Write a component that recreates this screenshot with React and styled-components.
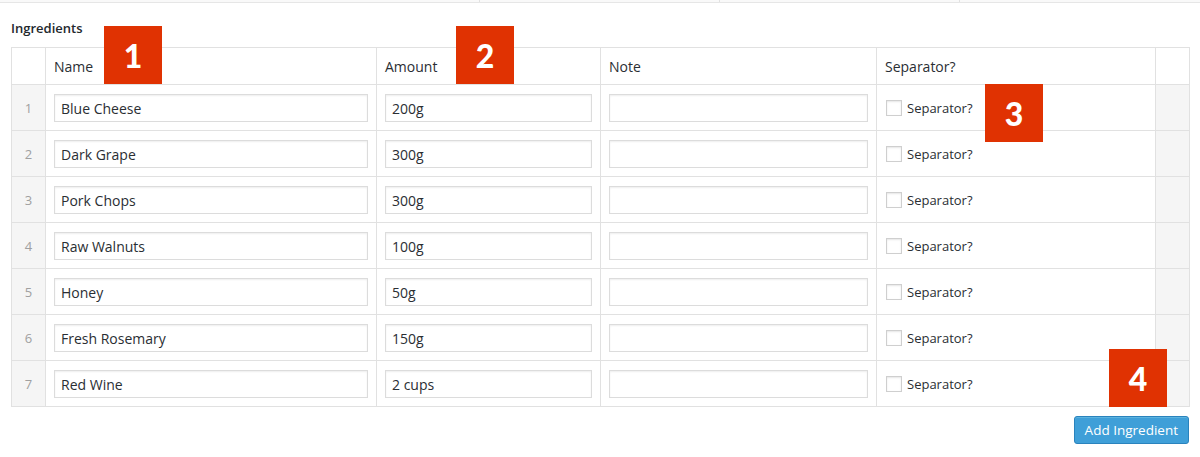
import styled, { createGlobalStyle } from "styled-components";

const GlobalStyle = createGlobalStyle`
  body {
    margin: 0;
    background: #fff;
    font-family: "Open Sans", "Noto Sans", sans-serif;
    color: #333;
  }
`;

const Page = styled.div`
  position: relative;
  width: 1200px;
  height: 457px;
  overflow: hidden;
`;

const TopStrip = styled.div`
  display: grid;
  grid-template-columns: 480px 240px 240px 1fr;
  height: 2px;
  border-bottom: 1px solid #e6e6e6;
  background: #f9f9f9;
`;

const StripCell = styled.div`
  border-right: 1px solid #e1e1e1;
  &:last-child {
    border-right: none;
  }
`;

const Section = styled.div`
  padding: 0 11px;
`;

const Label = styled.div`
  font-size: 13px;
  font-weight: 600;
  color: #23282d;
  padding-top: 16px;
  height: 44px;
  box-sizing: border-box;
  line-height: 18px;
`;

const Table = styled.table`
  width: 1178px;
  table-layout: fixed;
  border-collapse: collapse;
  border: 1px solid #e1e1e1;
  font-size: 14px;
`;

const HeadCell = styled.th`
  box-sizing: border-box;
  width: ${(p) => p.$w}px;
  height: 37px;
  border: 1px solid #e1e1e1;
  padding: 0 9px 0 8px;
  text-align: left;
  font-weight: 400;
  color: #2a2e33;
  background: #fff;
`;

const IndexCell = styled.td`
  border: 1px solid #e1e1e1;
  background: #f5f5f5;
  color: #a0a0a0;
  text-align: center;
  font-size: 13px;
  height: 46px;
  box-sizing: border-box;
  padding: 0;
`;

const Cell = styled.td`
  border: 1px solid #e1e1e1;
  padding: 1px 8px 0 8px;
  vertical-align: middle;
`;

const EndCell = styled.td`
  border: 1px solid #e1e1e1;
  background: #f5f5f5;
`;

const TextInput = styled.input`
  display: block;
  width: 100%;
  height: 28px;
  box-sizing: border-box;
  border: 1px solid #dcdcdc;
  box-shadow: inset 0 1px 2px rgba(0, 0, 0, 0.07);
  padding: 0 6px;
  font-family: inherit;
  font-size: 14px;
  color: #2a2e33;
  background: #fff;
  outline: none;
`;

const CheckLabel = styled.label`
  display: flex;
  align-items: center;
  gap: 5px;
  font-size: 13px;
  color: #2a2e33;
  padding-left: 1px;
`;

const Box = styled.span`
  width: 14px;
  height: 14px;
  border: 1px solid #cfcfcf;
  box-shadow: inset 0 1px 2px rgba(0, 0, 0, 0.1);
  background: #fff;
`;

const Footer = styled.div`
  display: flex;
  justify-content: flex-end;
  padding-top: 9px;
`;

const Button = styled.button`
  height: 28px;
  padding: 0 10px;
  border: 1px solid #2a83bd;
  border-radius: 3px;
  background: #3f9fd8;
  box-shadow: inset 0 1px 0 rgba(120, 200, 230, 0.5);
  color: #fff;
  font-family: inherit;
  font-size: 13.5px;
  cursor: pointer;
`;

const Badge = styled.div`
  position: absolute;
  left: ${(p) => p.$x}px;
  top: ${(p) => p.$y}px;
  width: 58px;
  height: 58px;
  background: #e03202;
  color: #fff;
  display: flex;
  align-items: center;
  justify-content: center;
  font-family: "Lato", sans-serif;
  font-weight: 900;
  font-size: 32px;
`;

const columns = [
  { label: "", w: 34 },
  { label: "Name", w: 331 },
  { label: "Amount", w: 224 },
  { label: "Note", w: 276 },
  { label: "Separator?", w: 279 },
  { label: "", w: 34 },
];

const rows = [
  ["Blue Cheese", "200g"],
  ["Dark Grape", "300g"],
  ["Pork Chops", "300g"],
  ["Raw Walnuts", "100g"],
  ["Honey", "50g"],
  ["Fresh Rosemary", "150g"],
  ["Red Wine", "2 cups"],
];

const badges = [
  { n: 1, x: 104, y: 26 },
  { n: 2, x: 456, y: 26 },
  { n: 3, x: 985, y: 84 },
  { n: 4, x: 1109, y: 349 },
];

export default function App() {
  return (
    <Page>
      <GlobalStyle />
      <TopStrip>
        <StripCell />
        <StripCell />
        <StripCell />
        <StripCell />
      </TopStrip>
      <Section>
        <Label>Ingredients</Label>
        <Table>
          <thead>
            <tr>
              {columns.map((c, i) => (
                <HeadCell key={i} $w={c.w}>
                  {c.label}
                </HeadCell>
              ))}
            </tr>
          </thead>
          <tbody>
            {rows.map(([name, amount], i) => (
              <tr key={i}>
                <IndexCell>{i + 1}</IndexCell>
                <Cell>
                  <TextInput defaultValue={name} />
                </Cell>
                <Cell>
                  <TextInput defaultValue={amount} />
                </Cell>
                <Cell>
                  <TextInput defaultValue="" />
                </Cell>
                <Cell>
                  <CheckLabel>
                    <Box />
                    Separator?
                  </CheckLabel>
                </Cell>
                <EndCell />
              </tr>
            ))}
          </tbody>
        </Table>
        <Footer>
          <Button>Add Ingredient</Button>
        </Footer>
      </Section>
      {badges.map((b) => (
        <Badge key={b.n} $x={b.x} $y={b.y}>
          {b.n}
        </Badge>
      ))}
    </Page>
  );
}
